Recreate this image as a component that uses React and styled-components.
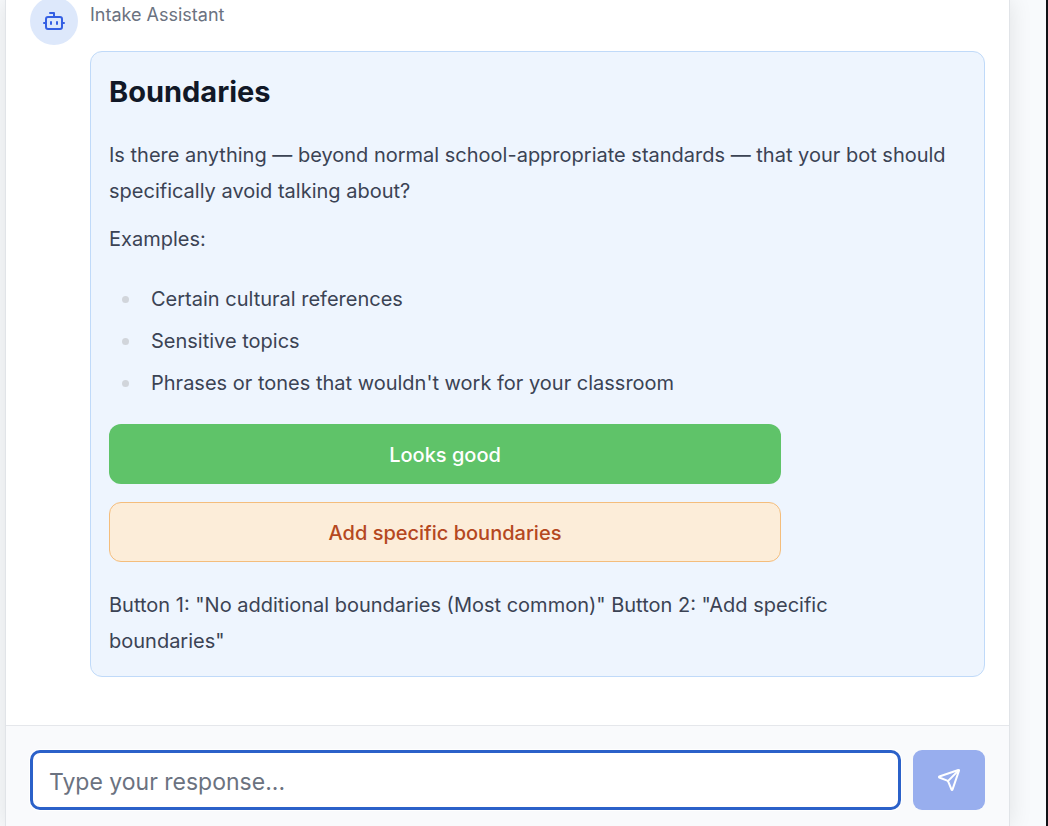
import React from "react";
import styled, { createGlobalStyle, css } from "styled-components";
import { Bot, Send } from "lucide-react";

const GlobalStyle = createGlobalStyle`
  *, *::before, *::after { box-sizing: border-box; }
  body {
    margin: 0;
    background: #f8fafc;
    color: #3b4354;
    font-family: Inter, "Liberation Sans", sans-serif;
    -webkit-font-smoothing: antialiased;
  }
  h2, p, ul { margin: 0; padding: 0; }
  button, input { font: inherit; }
`;

const Page = styled.div`
  min-height: 100vh;
  display: flex;
  padding: 0 36px 0 5px;
  border-right: 2px solid #111116;
`;

const ChatPanel = styled.main`
  flex: 1;
  min-width: 0;
  display: flex;
  flex-direction: column;
  background: #fff;
  border: solid #e1e4e8;
  border-width: 0 1px;
  box-shadow: 0 0 22px rgba(0, 0, 0, 0.1);
`;

const Messages = styled.section`
  flex: 1;
  padding: 0 24px 48px;
`;

const Message = styled.article`
  display: flex;
  align-items: flex-start;
  gap: 12px;
`;

const Avatar = styled.div`
  flex: none;
  width: 48px;
  height: 48px;
  margin-top: -3px;
  display: grid;
  place-items: center;
  border-radius: 50%;
  background: #dde8fb;
  color: #345fe3;
`;

const MessageBody = styled.div`
  flex: 1;
  min-width: 0;
  display: flex;
  flex-direction: column;
  gap: 21px;
`;

const Sender = styled.p`
  font-size: 18px;
  line-height: 30px;
  color: #6b7280;
`;

const Bubble = styled.div`
  padding: 18px 18px 17px;
  border: 1px solid #c0daf9;
  border-radius: 12px;
  background: #eef5fe;
`;

const Title = styled.h2`
  margin-bottom: 24px;
  font-size: 29px;
  font-weight: 700;
  line-height: 43px;
  color: #111827;
`;

const Paragraph = styled.p`
  margin-bottom: 12px;
  font-size: 20px;
  line-height: 36px;
`;

const ClosingNote = styled(Paragraph)`
  max-width: 800px;
  margin-bottom: 0;
`;

const ExampleList = styled.ul`
  margin: 24px 0 23px;
  display: grid;
  gap: 6px;
  list-style: none;
`;

const ExampleItem = styled.li`
  display: flex;
  align-items: center;
  gap: 22px;
  padding-left: 13px;
  font-size: 20px;
  line-height: 36px;

  &::before {
    content: "";
    width: 7px;
    height: 7px;
    border-radius: 50%;
    background: #d1d5db;
  }
`;

const Choices = styled.div`
  max-width: 672px;
  margin-bottom: 25px;
  display: grid;
  gap: 18px;
`;

const ChoiceButton = styled.button`
  height: 60px;
  padding: 2px 16px 0;
  border-radius: 12px;
  font-size: 20px;
  font-weight: 500;
  cursor: pointer;
  ${({ $tone }) =>
    $tone === "confirm"
      ? css`
          border: 0;
          background: #5fc369;
          color: #fff;
        `
      : css`
          border: 1px solid #f4bd7c;
          background: #fcedd9;
          color: #b5481f;
        `}
`;

const Composer = styled.form`
  display: flex;
  gap: 12px;
  padding: 24px 24px 16px;
  border-top: 1px solid #e5e7eb;
  background: #f9fafc;
`;

const ResponseInput = styled.input`
  flex: 1;
  min-width: 0;
  height: 60px;
  padding: 4px 16px 0;
  border: 3px solid #2b61c9;
  border-radius: 10px;
  outline: none;
  box-shadow: 0 0 0 1px #fff;
  background: #fff;
  font-size: 23px;
  color: #111827;

  &::placeholder { color: #6b7280; opacity: 1; }
`;

const SendButton = styled.button`
  width: 72px;
  height: 60px;
  display: grid;
  place-items: center;
  border: 0;
  border-radius: 9px;
  background: #98aeee;
  color: #fff;
  cursor: pointer;
`;

const examples = [
  "Certain cultural references",
  "Sensitive topics",
  "Phrases or tones that wouldn't work for your classroom",
];

export default function App() {
  return (
    <>
      <GlobalStyle />
      <Page>
        <ChatPanel>
          <Messages>
            <Message>
              <Avatar>
                <Bot size={24} aria-hidden="true" />
              </Avatar>
              <MessageBody>
                <Sender>Intake Assistant</Sender>
                <Bubble>
                  <Title>Boundaries</Title>
                  <Paragraph>
                    Is there anything — beyond normal school-appropriate standards — that your bot
                    should specifically avoid talking about?
                  </Paragraph>
                  <Paragraph>Examples:</Paragraph>
                  <ExampleList>
                    {examples.map((text) => (
                      <ExampleItem key={text}>{text}</ExampleItem>
                    ))}
                  </ExampleList>
                  <Choices>
                    <ChoiceButton type="button" $tone="confirm">Looks good</ChoiceButton>
                    <ChoiceButton type="button" $tone="edit">Add specific boundaries</ChoiceButton>
                  </Choices>
                  <ClosingNote>
                    Button 1: "No additional boundaries (Most common)" Button 2: "Add specific
                    boundaries"
                  </ClosingNote>
                </Bubble>
              </MessageBody>
            </Message>
          </Messages>
          <Composer onSubmit={(event) => event.preventDefault()}>
            <ResponseInput
              type="text"
              aria-label="Your response"
              placeholder="Type your response..."
            />
            <SendButton type="submit" aria-label="Send">
              <Send size={24} aria-hidden="true" />
            </SendButton>
          </Composer>
        </ChatPanel>
      </Page>
    </>
  );
}
